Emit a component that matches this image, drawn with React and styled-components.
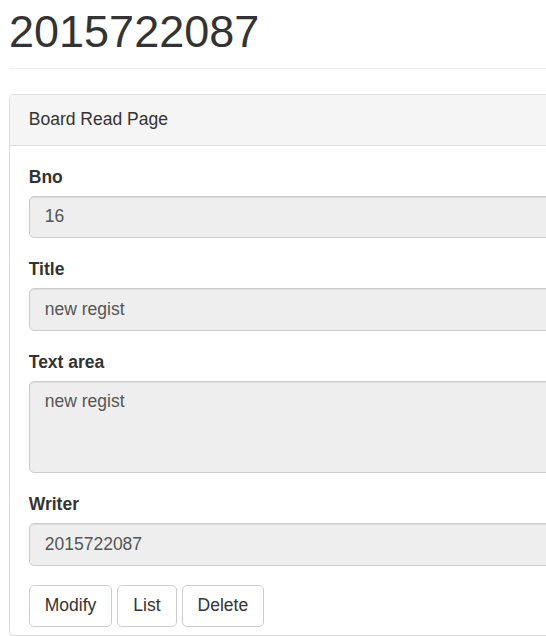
import React from 'react';
import styled, { createGlobalStyle } from 'styled-components';

const GlobalStyle = createGlobalStyle`
  html, body {
    margin: 0;
    padding: 0;
    overflow: hidden;
    background: #fff;
  }
  body {
    font-family: "Liberation Sans", Arial, Helvetica, sans-serif;
    font-size: 17.5px;
    line-height: 25px;
    color: #333;
  }
  * {
    box-sizing: border-box;
  }
`;

{/* 화면 밖으로 넘치는 부분은 잘라냄 */}
const Viewport = styled.div`
  width: 100vw;
  overflow: hidden;
`;

const Page = styled.div`
  width: 900px;
  padding: 0 0 0 9px;
`;

{/* 상단 제목 영역 */}
const PageHeader = styled.div`
  padding-bottom: 11.25px;
  margin: 7px 0 25px;
  border-bottom: 1px solid #eee;
`;

const Heading = styled.h1`
  margin: 0;
  font-size: 45px;
  font-weight: 500;
  line-height: 1.1;
  color: #333;
`;

{/* 패널 */}
const Panel = styled.div`
  border: 1px solid #ddd;
  border-radius: 5px;
  background: #fff;
  box-shadow: 0 1px 1px rgba(0, 0, 0, 0.05);
`;

const PanelHeading = styled.div`
  padding: 12.5px 18.75px;
  background: #f5f5f5;
  border-bottom: 1px solid #ddd;
  border-radius: 4px 4px 0 0;
  color: #333;
`;

const PanelBody = styled.div`
  padding: 18.75px 18.75px 8px;
`;

const FormGroup = styled.div`
  margin-bottom: 18.75px;
`;

const Label = styled.label`
  display: block;
  margin-bottom: 6.25px;
  font-weight: bold;
`;

{/* 읽기 전용 입력칸 */}
const Field = styled.div`
  height: ${(p) => (p.$tall ? '92.5px' : '42.5px')};
  padding: 7.5px 15px;
  background: #eee;
  border: 1px solid #ccc;
  border-radius: 5px;
  box-shadow: inset 0 1px 1px rgba(0, 0, 0, 0.075);
  color: #555;
  line-height: 25px;
`;

const ButtonRow = styled.div`
  display: flex;
  gap: 5px;
`;

const Button = styled.button`
  height: 42.5px;
  padding: 7.5px 15px;
  font-family: inherit;
  font-size: 17.5px;
  line-height: 25px;
  color: #333;
  background: #fff;
  border: 1px solid #ccc;
  border-radius: 5px;
  cursor: pointer;
`;

export default function App() {
  const fields = [
    { label: 'Bno', value: '16' },
    { label: 'Title', value: 'new regist' },
    { label: 'Text area', value: 'new regist', tall: true },
    { label: 'Writer', value: '2015722087' },
  ];

  return (
    <Viewport>
      <GlobalStyle />
      <Page>
        <PageHeader>
          <Heading>2015722087</Heading>
        </PageHeader>

        <Panel>
          <PanelHeading>Board Read Page</PanelHeading>
          <PanelBody>
            {fields.map((f) => (
              <FormGroup key={f.label}>
                <Label>{f.label}</Label>
                <Field $tall={f.tall}>{f.value}</Field>
              </FormGroup>
            ))}
            <ButtonRow>
              <Button>Modify</Button>
              <Button>List</Button>
              <Button>Delete</Button>
            </ButtonRow>
          </PanelBody>
        </Panel>
      </Page>
    </Viewport>
  );
}
